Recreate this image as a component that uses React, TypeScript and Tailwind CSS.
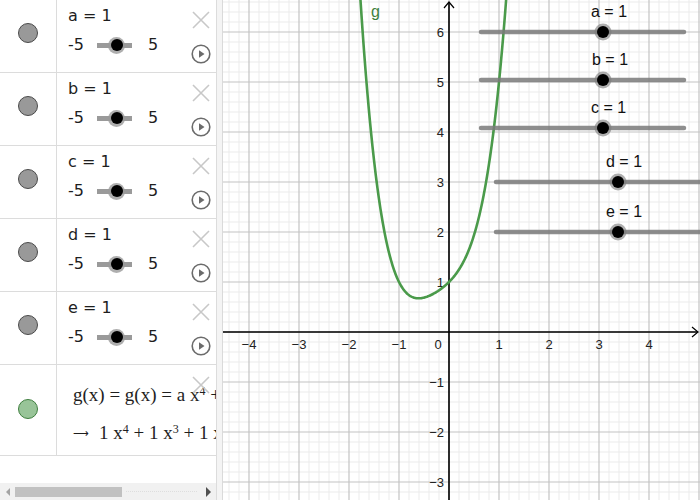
import React from "react";

const sans = { fontFamily: '"DejaVu Sans", sans-serif' };

function CloseIcon() {
  return (
    <svg width="18" height="18" viewBox="0 0 18 18" className="block">
      <path d="M1 1 L17 17 M17 1 L1 17" stroke="#c8c8c8" strokeWidth="1.6" fill="none" />
    </svg>
  );
}

function PlayIcon() {
  return (
    <svg width="20" height="20" viewBox="0 0 20 20" className="block">
      <circle cx="10" cy="10" r="8.8" stroke="#6b6b6b" strokeWidth="1.6" fill="none" />
      <path d="M8 6.2 L13.5 10 L8 13.8 Z" fill="#6b6b6b" />
    </svg>
  );
}

function SliderRow({ name }: { name: string }) {
  return (
    <div className="flex h-[73px] border-b border-[#dcdcdc]">
      <div className="w-[57px] shrink-0 border-r border-[#dcdcdc] flex justify-center pt-[23px]">
        <div className="w-[20px] h-[20px] rounded-full bg-[#999999] border border-[#4a4a4a]" />
      </div>
      <div className="relative flex-1 pl-[11px] pt-[6px] text-[16px] leading-[20px] text-[#1e1e1e]" style={sans}>
        <div>{name} = 1</div>
        <div className="flex items-center mt-[9px] h-[20px]">
          <span className="w-[29px]">-5</span>
          <div className="relative w-[35px] h-[5px] bg-[#9a9a9a]">
            <div className="absolute left-[11px] top-[-6px] w-[17px] h-[17px] rounded-full bg-[#9a9a9a]/80 flex items-center justify-center">
              <div className="w-[12px] h-[12px] rounded-full bg-black" />
            </div>
          </div>
          <span className="ml-[16px]">5</span>
        </div>
        <div className="absolute left-[135px] top-[11px]">
          <CloseIcon />
        </div>
        <div className="absolute left-[134px] top-[44px]">
          <PlayIcon />
        </div>
      </div>
    </div>
  );
}

function FunctionRow() {
  const serif = { fontFamily: '"Liberation Serif", serif' };
  return (
    <div className="flex h-[91px] border-b border-[#dcdcdc]">
      <div className="w-[57px] shrink-0 border-r border-[#dcdcdc] flex justify-center pt-[34px]">
        <div className="w-[20px] h-[20px] rounded-full bg-[#98c498] border border-[#3f7f3f]" />
      </div>
      <div className="relative flex-1 overflow-hidden text-[#1e1e1e]" style={serif}>
        <div className="absolute left-[16px] top-[19px] whitespace-nowrap text-[19px] leading-[22px]">
          g(x) = g(x) = a x<sup className="text-[12px]">4</sup> + b x<sup className="text-[12px]">3</sup>
        </div>
        <div className="absolute left-[15px] top-[57px] whitespace-nowrap text-[19px] leading-[22px] flex items-center">
          <span className="text-[11px] w-[27px] pl-[1px]">⟶</span>
          <span>
            1 x<sup className="text-[12px]">4</sup> + 1 x<sup className="text-[12px]">3</sup> + 1 x<sup className="text-[12px]">2</sup>
          </span>
        </div>
        <div className="absolute left-[135px] top-[11px]">
          <CloseIcon />
        </div>
      </div>
    </div>
  );
}

function AlgebraPanel() {
  return (
    <div className="w-[217px] shrink-0 h-full flex flex-col border-r border-[#dcdcdc] bg-white">
      {["a", "b", "c", "d", "e"].map((n) => (
        <SliderRow key={n} name={n} />
      ))}
      <FunctionRow />
      <div className="flex-1" />
      <div className="h-[17px] bg-[#f1f1f1] flex items-center">
        <div className="w-[15px] flex justify-center">
          <div className="w-0 h-0 border-y-[4px] border-y-transparent border-r-[4px] border-r-[#a3a3a3]" />
        </div>
        <div className="w-[107px] h-[10px] bg-[#c1c1c1]" />
        <div className="flex-1 mx-[4px] border-t border-dotted border-[#dedede]" />
        <div className="w-[15px] flex justify-center">
          <div className="w-0 h-0 border-y-[5px] border-y-transparent border-l-[5px] border-l-[#505050]" />
        </div>
      </div>
    </div>
  );
}

const ox = 226;
const oy = 332;
const u = 50;
const W = 477;
const H = 500;

function curvePath() {
  const pts: string[] = [];
  for (let x = -1.8; x <= 1.17; x += 0.01) {
    const y = x ** 4 + x ** 3 + x ** 2 + x + 1;
    pts.push(`${(ox + x * u).toFixed(2)},${(oy - y * u).toFixed(2)}`);
  }
  return "M" + pts.join(" L");
}

const sliders = [
  { n: "a", x1: 258, x2: 461, y: 32, k: 380, lx: 368 },
  { n: "b", x1: 258, x2: 461, y: 80, k: 380, lx: 369 },
  { n: "c", x1: 258, x2: 461, y: 128, k: 380, lx: 368 },
  { n: "d", x1: 273, x2: 500, y: 182, k: 395, lx: 383 },
  { n: "e", x1: 273, x2: 500, y: 232, k: 395, lx: 383 },
];

function Graph() {
  const minorX: number[] = [];
  const majorX: number[] = [];
  for (let x = ox % 10; x < W; x += 10) ((x - ox) % 50 === 0 ? majorX : minorX).push(x);
  const minorY: number[] = [];
  const majorY: number[] = [];
  for (let y = oy % 10; y < H; y += 10) ((y - oy) % 50 === 0 ? majorY : minorY).push(y);
  const label = { fontFamily: '"Liberation Sans", sans-serif' };
  return (
    <svg width={W} height={H} className="block" style={label}>
      {minorX.map((x) => (
        <line key={"mx" + x} x1={x} x2={x} y1={0} y2={H} stroke="#ebebeb" strokeWidth="1" />
      ))}
      {minorY.map((y) => (
        <line key={"my" + y} x1={0} x2={W} y1={y} y2={y} stroke="#ebebeb" strokeWidth="1" />
      ))}
      {majorX.map((x) => (
        <line key={"Mx" + x} x1={x} x2={x} y1={0} y2={H} stroke="#c4c4c4" strokeWidth="1.2" />
      ))}
      {majorY.map((y) => (
        <line key={"My" + y} x1={0} x2={W} y1={y} y2={y} stroke="#c4c4c4" strokeWidth="1.2" />
      ))}
      <line x1={0} x2={W - 2} y1={oy} y2={oy} stroke="#000" strokeWidth="1.6" />
      <path d={`M${W - 8} ${oy - 5} L${W - 2} ${oy} L${W - 8} ${oy + 5}`} stroke="#000" strokeWidth="1.2" fill="none" />
      <line x1={ox} x2={ox} y1={H} y2={2} stroke="#000" strokeWidth="1.6" />
      <path d={`M${ox - 5} 8 L${ox} 2 L${ox + 5} 8`} stroke="#000" strokeWidth="1.2" fill="none" />
      {[-4, -3, -2, -1, 1, 2, 3, 4].map((k) => (
        <text key={"xl" + k} x={ox + k * u} y={oy + 17} fontSize="13" textAnchor="middle" fill="#222">
          {k < 0 ? "\u2212" + -k : k}
        </text>
      ))}
      <text x={ox - 11} y={oy + 17} fontSize="13" textAnchor="middle" fill="#222">
        0
      </text>
      {[-3, -2, -1, 1, 2, 3, 4, 5, 6].map((k) => (
        <text key={"yl" + k} x={ox - 5} y={oy - k * u + 4.5} fontSize="13" textAnchor="end" fill="#222">
          {k < 0 ? "\u2212" + -k : k}
        </text>
      ))}
      <path d={curvePath()} stroke="#4a9a4a" strokeWidth="2.6" fill="none" strokeLinejoin="round" />
      <text x={148} y={17} fontSize="16" fill="#3d7f3d">
        g
      </text>
      {sliders.map((s) => (
        <g key={s.n}>
          <line x1={s.x1} x2={s.x2} y1={s.y} y2={s.y} stroke="#7a7a7a" strokeOpacity="0.85" strokeWidth="4.5" strokeLinecap="round" />
          <circle cx={s.k} cy={s.y} r="8.5" fill="#7a7a7a" fillOpacity="0.6" />
          <circle cx={s.k} cy={s.y} r="6" fill="#000" />
          <text x={s.lx} y={s.y - 15} fontSize="16" fill="#111">
            {s.n} = 1
          </text>
        </g>
      ))}
    </svg>
  );
}

export default function App() {
  return (
    <div className="w-[700px] h-[500px] flex overflow-hidden bg-white">
      <AlgebraPanel />
      <div className="w-[6px] shrink-0 h-full bg-[#f4f4f4] border-r border-[#dadada]" />
      <div className="flex-1 h-full overflow-hidden">
        <Graph />
      </div>
    </div>
  );
}
